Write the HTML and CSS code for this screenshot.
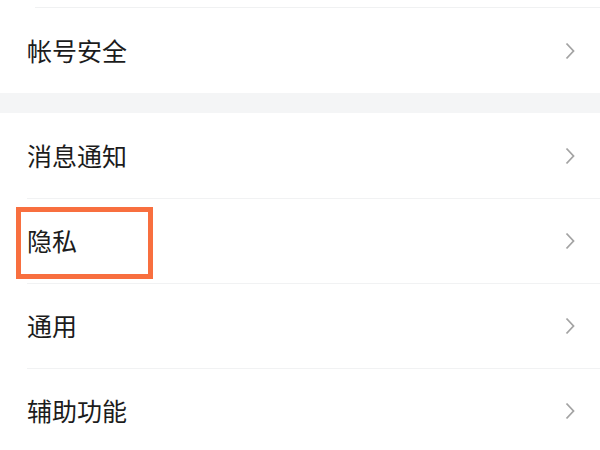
FILE: index.html
```html
<!DOCTYPE html>
<html lang="zh">
<head>
<meta charset="utf-8">
<link rel="stylesheet" href="styles.css">
</head>
<body>
<div class="top"></div>
<div class="group">
  <div class="row"><span class="label">帐号安全</span><svg class="chev" viewBox="0 0 10 18"><path d="M1.5 1.5 L8.5 9 L1.5 16.5"/></svg></div>
</div>
<div class="gap"></div>
<div class="group">
  <div class="row"><span class="label">消息通知</span><svg class="chev" viewBox="0 0 10 18"><path d="M1.5 1.5 L8.5 9 L1.5 16.5"/></svg></div>
  <div class="row highlighted"><span class="label">隐私</span><svg class="chev" viewBox="0 0 10 18"><path d="M1.5 1.5 L8.5 9 L1.5 16.5"/></svg><div class="mark"></div></div>
  <div class="row"><span class="label">通用</span><svg class="chev" viewBox="0 0 10 18"><path d="M1.5 1.5 L8.5 9 L1.5 16.5"/></svg></div>
  <div class="row"><span class="label">辅助功能</span><svg class="chev" viewBox="0 0 10 18"><path d="M1.5 1.5 L8.5 9 L1.5 16.5"/></svg></div>
</div>
</body>
</html>
```

FILE: styles.css
```css
html, body {
  margin: 0;
  padding: 0;
  background: #ffffff;
  font-family: "Noto Sans CJK SC", "Noto Sans", sans-serif;
  overflow: hidden;
}
.top {
  height: 7px;
  margin-left: 35px;
  border-bottom: 1px solid #f0f1f2;
}
.gap {
  height: 20px;
  background: #f4f5f6;
}
.group {
  background: #ffffff;
}
.row {
  position: relative;
  height: 85px;
  display: flex;
  align-items: center;
  justify-content: space-between;
  padding: 0 25px 0 27px;
  box-sizing: border-box;
}
.group:first-of-type .row {
  height: 84px;
}
.row + .row::before {
  content: "";
  position: absolute;
  top: 0;
  left: 27px;
  right: 0;
  height: 1px;
  background: #f1f2f3;
}
.label {
  font-size: 25px;
  color: #1c1c1c;
  line-height: 1;
}
.chev {
  width: 10px;
  height: 18px;
  fill: none;
  stroke: #a3a3a3;
  stroke-width: 1.8;
}
.mark {
  position: absolute;
  left: 16px;
  top: 9px;
  width: 137px;
  height: 72px;
  border: 5px solid #f86f3f;
  box-sizing: border-box;
}
```
